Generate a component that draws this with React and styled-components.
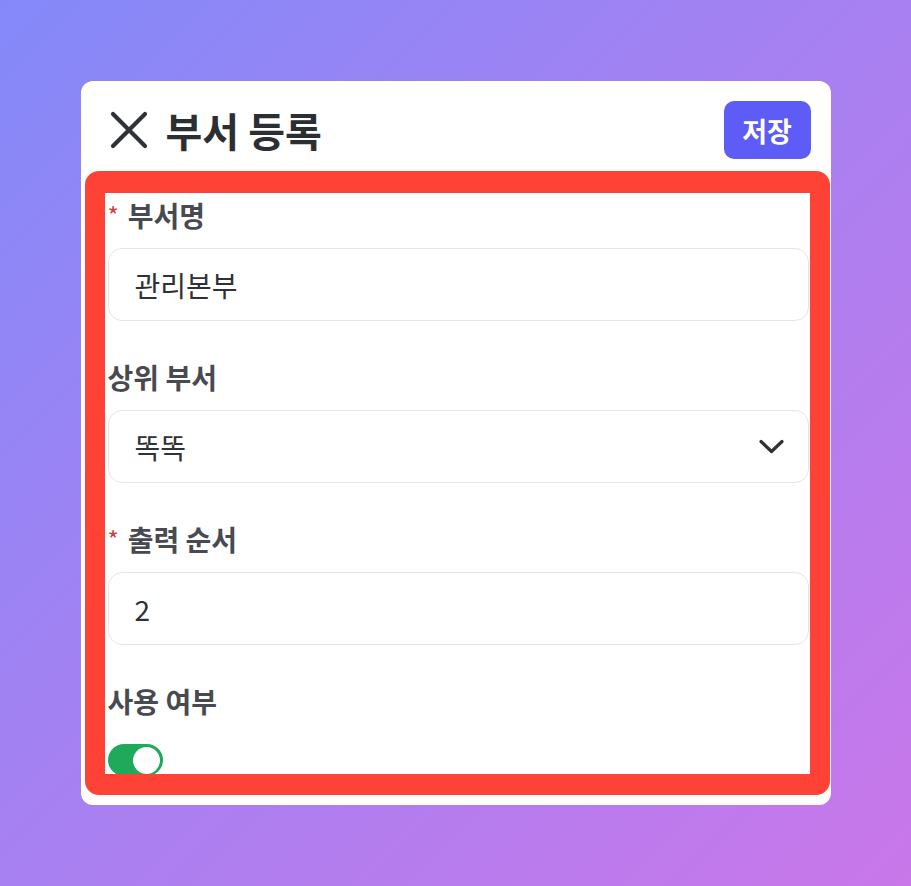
import React from 'react';
import styled, { createGlobalStyle } from 'styled-components';

const GlobalStyle = createGlobalStyle`
  * { box-sizing: border-box; }
  body {
    margin: 0;
    font-family: "Noto Sans CJK KR", "Noto Sans", sans-serif;
  }
`;

const Page = styled.div`
  min-height: 100vh;
  display: flex;
  align-items: center;
  justify-content: center;
  background: linear-gradient(135deg, #8489f9 0%, #a880f1 50%, #c977e9 100%);
`;

const Card = styled.div`
  width: 750px;
  height: 724px;
  background: #ffffff;
  border-radius: 12px;
  display: flex;
  flex-direction: column;
  overflow: hidden;
`;

const Header = styled.header`
  display: flex;
  align-items: center;
  justify-content: space-between;
  padding: 20px 20px 12px 29px;
`;

const TitleGroup = styled.div`
  display: flex;
  align-items: center;
  gap: 18px;
`;

const CloseButton = styled.button`
  display: flex;
  padding: 0;
  border: none;
  background: none;
  color: #2f3237;
  cursor: pointer;
`;

const Title = styled.h1`
  margin: 0;
  font-size: 40px;
  line-height: 48px;
  font-weight: 700;
  color: #2b2e33;
`;

const SaveButton = styled.button`
  width: 87px;
  height: 58px;
  border: none;
  border-radius: 10px;
  background: #5d5cf6;
  color: #ffffff;
  font-family: inherit;
  font-size: 27px;
  font-weight: 700;
  cursor: pointer;
`;

const FormArea = styled.section`
  flex: 1;
  margin: 0 1px 10px 4px;
  border: 20px solid #fe4336;
  border-top-width: 22px;
  border-bottom-width: 21px;
  border-radius: 14px;
  overflow: hidden;
`;

const Fields = styled.div`
  display: flex;
  flex-direction: column;
  gap: 40px;
  padding: 6px 1px 0 3px;
`;

const Field = styled.div`
  display: flex;
  flex-direction: column;
`;

const Label = styled.label`
  display: flex;
  align-items: center;
  height: 32px;
  margin-bottom: ${(p) => (p.$toggle ? '27px' : '17px')};
  font-size: 28px;
  font-weight: 600;
  color: #474a51;
`;

const Required = styled.span`
  align-self: flex-start;
  margin: 4px 9px 0 0;
  font-size: 24px;
  line-height: 24px;
  font-weight: 400;
  color: #cc3d3d;
`;

const Box = styled.div`
  display: flex;
  align-items: center;
  justify-content: space-between;
  height: 73px;
  padding: 0 24px 0 26px;
  border: 1.5px solid #e3e5e9;
  border-radius: 14px;
  background: #ffffff;
  font-size: 28px;
  color: #2f3135;
`;

const Chevron = styled.svg`
  display: block;
  color: #2f3135;
`;

const Toggle = styled.div`
  position: relative;
  width: 55px;
  height: 32px;
  border-radius: 16px;
  background: ${(p) => (p.$on ? '#1ea95b' : '#d1d5db')};
`;

const Knob = styled.span`
  position: absolute;
  top: 3px;
  left: ${(p) => (p.$on ? '25px' : '3px')};
  width: 27px;
  height: 27px;
  border-radius: 50%;
  background: #ffffff;
`;

function App() {
  return (
    <>
      <GlobalStyle />
      <Page>
        <Card>
          <Header>
            <TitleGroup>
              <CloseButton aria-label="닫기">
                <svg width="38" height="38" viewBox="0 0 38 38" fill="none">
                  <path d="M3 3 35 35M35 3 3 35" stroke="currentColor" strokeWidth="4.2" strokeLinecap="round" />
                </svg>
              </CloseButton>
              <Title>부서 등록</Title>
            </TitleGroup>
            <SaveButton>저장</SaveButton>
          </Header>

          <FormArea>
            <Fields>
              <Field>
                <Label><Required>*</Required>부서명</Label>
                <Box>관리본부</Box>
              </Field>
              <Field>
                <Label>상위 부서</Label>
                <Box>
                  똑똑
                  <Chevron width="25" height="15" viewBox="0 0 25 15" fill="none">
                    <path d="M2 2.5 12.5 12.5 23 2.5" stroke="currentColor" strokeWidth="3.2" strokeLinecap="round" strokeLinejoin="round" />
                  </Chevron>
                </Box>
              </Field>
              <Field>
                <Label><Required>*</Required>출력 순서</Label>
                <Box>2</Box>
              </Field>
              <Field>
                <Label $toggle>사용 여부</Label>
                <Toggle $on>
                  <Knob $on />
                </Toggle>
              </Field>
            </Fields>
          </FormArea>
        </Card>
      </Page>
    </>
  );
}

export default App;
